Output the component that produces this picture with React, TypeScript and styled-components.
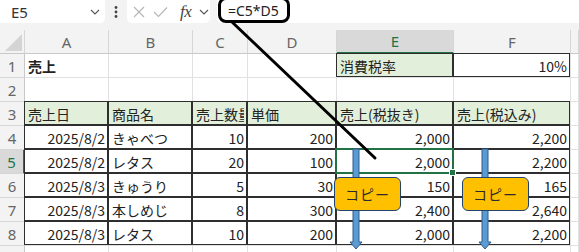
import styled, { createGlobalStyle } from "styled-components";

type Align = "left" | "right";

interface CellSpec {
  text?: string;
  align?: Align;
  boxed?: boolean;
  fill?: boolean;
  bold?: boolean;
  selected?: boolean;
}

const GREEN = "#217346";
const GRID = "#e1e1e1";
const LINE = "#2e2e2e";
const HEAD_BG = "#f3f3f3";
const FILL = "#e2efda";

const columns = ["A", "B", "C", "D", "E", "F", ""];

const GlobalStyle = createGlobalStyle`
  body {
    margin: 0;
    background: #ffffff;
    font-family: "Noto Sans CJK JP", "Noto Sans", sans-serif;
  }
`;

const Window = styled.div`
  position: relative;
  width: 579px;
  height: 252px;
  overflow: hidden;
  background: #ffffff;
`;

const TopArea = styled.div`
  background: ${HEAD_BG};
  padding-bottom: 7px;
`;

const Toolbar = styled.div`
  display: flex;
  height: 23px;
`;

const NameBox = styled.div`
  width: 105px;
  box-sizing: border-box;
  background: #fff;
  border-radius: 0 0 5px 0;
  display: flex;
  align-items: center;
  justify-content: space-between;
  padding: 0 5px 0 11px;
  font-family: "Noto Sans", sans-serif;
  font-size: 15px;
  color: #333;
`;

const Kebab = styled.div`
  width: 22px;
  display: flex;
  align-items: center;
  justify-content: center;
`;

const FxBox = styled.div`
  width: 83px;
  box-sizing: border-box;
  background: #fff;
  border-radius: 0 0 5px 5px;
  display: flex;
  align-items: center;
  gap: 8px;
  padding: 0 0 0 6px;
`;

const FxLabel = styled.span`
  font-family: "Liberation Serif", serif;
  font-style: italic;
  font-size: 17px;
  color: #444;
  margin-left: 4px;
  letter-spacing: -0.5px;
`;

const FormulaInput = styled.div`
  flex: 1;
  margin-left: 7px;
  background: #fff;
  border-radius: 0 0 0 5px;
  display: flex;
  align-items: flex-start;
`;

const FormulaCallout = styled.div`
  margin: -3px 0 0 1px;
  height: 26px;
  box-sizing: border-box;
  border: 3px solid #000;
  border-radius: 8px;
  padding: 1px 8px 0 7px;
  display: flex;
  align-items: center;
  font-family: "Noto Sans", sans-serif;
  font-size: 14px;
  color: #222;
`;

const Sheet = styled.div`
  display: grid;
  grid-template-columns: 25px 84px 84px 55px 89px 117px 117px 1fr;
  grid-auto-rows: 24px;
`;

const ColHead = styled.div<{ $active?: boolean }>`
  box-sizing: border-box;
  background: ${(p) => (p.$active ? "#d9d9d9" : HEAD_BG)};
  border-right: 1px solid #d6d6d6;
  border-bottom: ${(p) => (p.$active ? `2px solid ${GREEN}` : "1px solid #c8c8c8")};
  display: flex;
  align-items: center;
  justify-content: center;
  font-family: "Noto Sans", sans-serif;
  font-size: 15px;
  color: ${(p) => (p.$active ? GREEN : "#666")};
`;

const Corner = styled.div`
  box-sizing: border-box;
  background: ${HEAD_BG};
  border-right: 1px solid #d6d6d6;
  border-bottom: 1px solid #c8c8c8;
  display: flex;
  align-items: flex-end;
  justify-content: flex-end;
  padding: 0 2px 2px 0;
`;

const RowHead = styled.div<{ $active?: boolean }>`
  box-sizing: border-box;
  background: ${(p) => (p.$active ? "#d9d9d9" : HEAD_BG)};
  border-bottom: 1px solid #d6d6d6;
  border-right: ${(p) => (p.$active ? `2px solid ${GREEN}` : "1px solid #c8c8c8")};
  display: flex;
  align-items: center;
  justify-content: center;
  font-family: "Noto Sans", sans-serif;
  font-size: 15px;
  color: ${(p) => (p.$active ? GREEN : "#666")};
`;

const Cell = styled.div<{
  $align?: Align;
  $boxed?: boolean;
  $fill?: boolean;
  $bold?: boolean;
}>`
  position: relative;
  box-sizing: border-box;
  min-width: 0;
  border-right: 1px solid ${GRID};
  border-bottom: 1px solid ${GRID};
  background: ${(p) => (p.$fill ? FILL : "#fff")};
  display: flex;
  align-items: center;
  justify-content: ${(p) => (p.$align === "right" ? "flex-end" : "flex-start")};
  padding: 1px 3px 0 3px;
  font-size: 14px;
  font-weight: ${(p) => (p.$bold ? 700 : 400)};
  color: #222;
  white-space: nowrap;
  overflow: ${(p) => (p.$boxed ? "visible" : "hidden")};

  ${(p) =>
    p.$boxed &&
    `
    &::after {
      content: "";
      position: absolute;
      top: -1px;
      left: -1px;
      right: 0;
      bottom: 0;
      border: 1px solid ${LINE};
      pointer-events: none;
    }
  `}
`;

const CellText = styled.span`
  overflow: hidden;
  white-space: nowrap;
`;

const Selection = styled.div`
  position: absolute;
  top: -2px;
  left: -2px;
  right: -1px;
  bottom: -1px;
  border: 2px solid ${GREEN};
  z-index: 2;

  &::after {
    content: "";
    position: absolute;
    right: -4px;
    bottom: -4px;
    width: 5px;
    height: 5px;
    background: ${GREEN};
    border: 1px solid #fff;
  }
`;

const Overlay = styled.svg`
  position: absolute;
  top: 0;
  left: 0;
  z-index: 5;
  pointer-events: none;
`;

const CopyTag = styled.div<{ $left: number }>`
  position: absolute;
  top: 177px;
  left: ${(p) => p.$left}px;
  width: 67px;
  height: 34px;
  box-sizing: border-box;
  background: #ffc000;
  border: 1.5px solid #24426e;
  border-radius: 6px;
  z-index: 6;
  display: flex;
  align-items: center;
  justify-content: center;
  font-family: "Noto Sans CJK JP", sans-serif;
  font-size: 14px;
  letter-spacing: 1px;
  color: #2b2b2b;
`;

const blank: CellSpec = {};
const box = (text: string, align: Align = "right"): CellSpec => ({
  text,
  align,
  boxed: true,
});
const head = (text: string): CellSpec => ({
  text,
  boxed: true,
  fill: true,
});

const data: [string, string, string, string, string, string][] = [
  ["2025/8/2", "きゃべつ", "10", "200", "2,000", "2,200"],
  ["2025/8/2", "レタス", "20", "100", "2,000", "2,200"],
  ["2025/8/3", "きゅうり", "5", "30", "150", "165"],
  ["2025/8/3", "本しめじ", "8", "300", "2,400", "2,640"],
  ["2025/8/3", "レタス", "10", "200", "2,000", "2,200"],
];

const rows: CellSpec[][] = [
  [
    { text: "売上", bold: true },
    blank,
    blank,
    blank,
    { text: "消費税率", boxed: true, fill: true },
    box("10%"),
    blank,
  ],
  [blank, blank, blank, blank, blank, blank, blank],
  [
    head("売上日"),
    head("商品名"),
    head("売上数量"),
    head("単価"),
    head("売上(税抜き)"),
    head("売上(税込み)"),
    blank,
  ],
  ...data.map((r, i) => [
    box(r[0]),
    box(r[1], "left"),
    box(r[2]),
    box(r[3]),
    { ...box(r[4]), selected: i === 1 },
    box(r[5]),
    blank,
  ]),
  [blank, blank, blank, blank, blank, blank, blank],
];

const Chevron = () => (
  <svg width="10" height="6" viewBox="0 0 10 6">
    <path d="M1 1 L5 5 L9 1" fill="none" stroke="#555" strokeWidth="1.1" />
  </svg>
);

const DownArrow = ({ x }: { x: number }) => (
  <path
    d={`M${x - 3} 149 H${x + 3} V242 H${x + 6} L${x} 249 L${x - 6} 242 H${x - 3} Z`}
    fill="#5b9bd5"
    stroke="#2e5c8a"
    strokeWidth="1"
  />
);

const FormulaBar = () => (
  <TopArea>
    <Toolbar>
      <NameBox>
        E5
        <Chevron />
      </NameBox>
      <Kebab>
        <svg width="4" height="14" viewBox="0 0 4 14">
          <circle cx="2" cy="2.5" r="1.4" fill="#444" />
          <circle cx="2" cy="7" r="1.4" fill="#444" />
          <circle cx="2" cy="11.5" r="1.4" fill="#444" />
        </svg>
      </Kebab>
      <FxBox>
        <svg width="12" height="12" viewBox="0 0 12 12">
          <path d="M1 1 L11 11 M11 1 L1 11" stroke="#b5b5b5" strokeWidth="1.1" />
        </svg>
        <svg width="15" height="12" viewBox="0 0 15 12">
          <path d="M1 6 L5.5 10.5 L14 1.5" fill="none" stroke="#b5b5b5" strokeWidth="1.1" />
        </svg>
        <FxLabel>fx</FxLabel>
        <Chevron />
      </FxBox>
      <FormulaInput>
        <FormulaCallout>=C5*D5</FormulaCallout>
      </FormulaInput>
    </Toolbar>
  </TopArea>
);

export default function App() {
  return (
    <>
      <GlobalStyle />
      <Window>
        <FormulaBar />
        <Sheet>
          <Corner>
            <svg width="17" height="17" viewBox="0 0 17 17">
              <polygon points="17,0 17,17 0,17" fill="#d4d4d4" />
            </svg>
          </Corner>
          {columns.map((c, i) => (
            <ColHead key={i} $active={c === "E"}>
              {c}
            </ColHead>
          ))}
          {rows.map((row, r) => (
            <>
              {/* row 9 only peeks in at the bottom, its number is out of view */}
              <RowHead key={`h${r}`} $active={r === 4}>
                {r < 8 ? r + 1 : ""}
              </RowHead>
              {row.map((cell, c) => (
                <Cell
                  key={`${r}-${c}`}
                  $align={cell.align}
                  $boxed={cell.boxed}
                  $fill={cell.fill}
                  $bold={cell.bold}
                >
                  <CellText>{cell.text}</CellText>
                  {cell.selected && <Selection />}
                </Cell>
              ))}
            </>
          ))}
        </Sheet>
        <Overlay width="579" height="252" viewBox="0 0 579 252">
          <line x1="232" y1="22" x2="375" y2="158" stroke="#000" strokeWidth="3" strokeLinecap="round" />
          <DownArrow x={356} />
          <DownArrow x={485} />
        </Overlay>
        <CopyTag $left={334}>コピー</CopyTag>
        <CopyTag $left={462}>コピー</CopyTag>
      </Window>
    </>
  );
}
